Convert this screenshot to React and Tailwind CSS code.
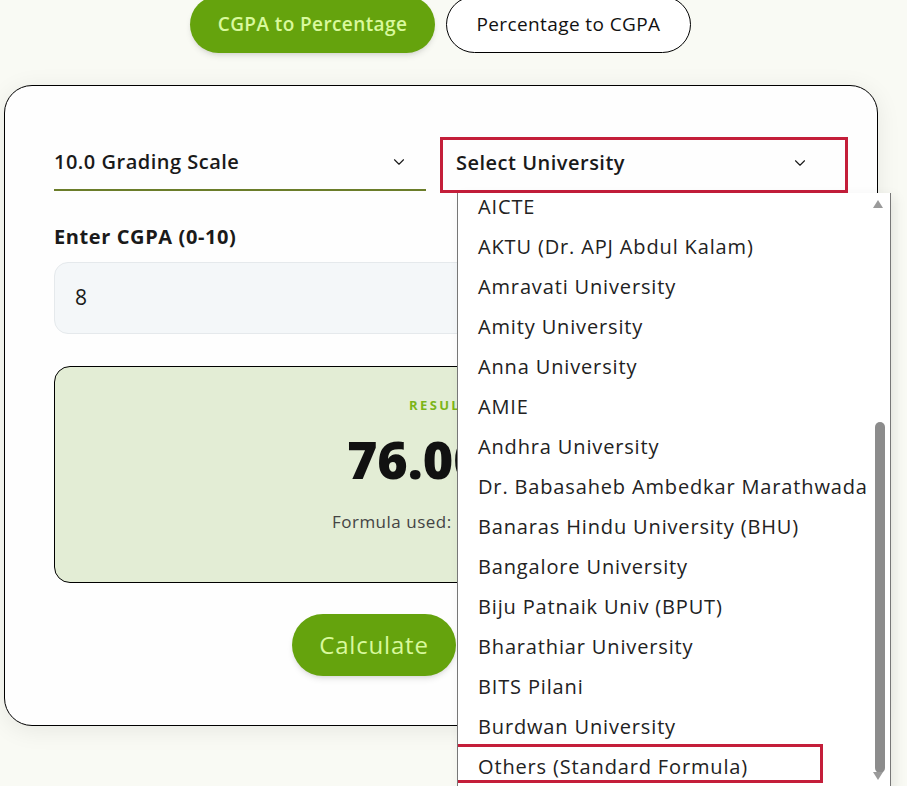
import React from 'react';
import { ChevronDown } from 'lucide-react';

const universities = [
  'AICTE',
  'AKTU (Dr. APJ Abdul Kalam)',
  'Amravati University',
  'Amity University',
  'Anna University',
  'AMIE',
  'Andhra University',
  'Dr. Babasaheb Ambedkar Marathwada',
  'Banaras Hindu University (BHU)',
  'Bangalore University',
  'Biju Patnaik Univ (BPUT)',
  'Bharathiar University',
  'BITS Pilani',
  'Burdwan University',
  'Others (Standard Formula)',
];

const App = () => {
  return (
    <div
      className="relative min-h-screen overflow-hidden bg-[#f9faf4] text-[#1a1a1a]"
      style={{ fontFamily: '"Open Sans", "Noto Sans", sans-serif' }}
    >
      {/* Mode tabs */}
      <div className="flex gap-[11px] -mt-[4px] pl-[190px]">
        <button className="h-[57px] w-[245px] shrink-0 rounded-full bg-[#65a30d] text-[19px] font-semibold tracking-[0.4px] text-[#d9f99d] shadow-md">
          CGPA to Percentage
        </button>
        <button className="h-[57px] w-[245px] shrink-0 rounded-full border border-black bg-white text-[19px] font-medium tracking-[0.4px] text-[#111]">
          Percentage to CGPA
        </button>
      </div>

      {/* Card */}
      <div className="ml-[4px] mt-[32px] w-[874px] rounded-[28px] border border-black bg-[#fefefe] px-[49px] pt-[49px] pb-[49px] shadow-[0_4px_24px_rgba(0,0,0,0.08)]">
        <div className="flex items-start">
          <div className="flex h-[56px] w-[372px] shrink-0 items-center justify-between border-b-2 border-[#6b7d2a] pr-[18px]">
            <span className="text-[20px] font-semibold tracking-[0.5px]">10.0 Grading Scale</span>
            <ChevronDown size={18} strokeWidth={1.5} />
          </div>
          <div className="ml-[14px] mt-[2px] flex h-[56px] w-[408px] shrink-0 items-center justify-between border-[3px] border-[#c41e3a] pb-[5px] pl-[13px] pr-[36px]">
            <span className="text-[20px] font-semibold tracking-[0.5px]">Select University</span>
            <ChevronDown size={18} strokeWidth={1.5} />
          </div>
        </div>

        <div className="mt-[30px] text-[20px] font-bold leading-[28px] tracking-[0.6px]">Enter CGPA (0-10)</div>
        <div className="mt-[11px] flex h-[72px] w-[772px] items-center rounded-[14px] border border-[#e5e9ec] bg-[#f4f7f9] px-[20px] text-[21px]">
          8
        </div>

        <div className="mt-[32px] flex h-[217px] w-[772px] flex-col items-center rounded-[16px] border border-black bg-[#e3edd5]">
          <div className="mt-[29px] text-[13px] font-bold tracking-[0.18em] text-[#7cb518]">RESULT</div>
          <div className="mt-[13px] text-[52px] font-extrabold leading-[60px] text-[#111]">76.00%</div>
          <div className="mt-[20px] text-[17px] tracking-[0.5px] text-[#444]">Formula used: CGPA × 9.5</div>
        </div>

        <div className="mt-[31px] flex justify-center gap-[14px]">
          <button className="h-[62px] w-[164px] rounded-full bg-[#65a30d] text-[24px] font-medium tracking-[0.8px] text-[#d9f99d] shadow-md">
            Calculate
          </button>
          <button className="h-[62px] w-[120px] rounded-full border border-black bg-white text-[24px] font-medium">
            Reset
          </button>
        </div>
      </div>

      {/* Open university dropdown */}
      <div className="absolute left-[457px] top-[193px] h-[600px] w-[434px] overflow-hidden border-x border-[#777] bg-white shadow-[4px_4px_12px_rgba(0,0,0,0.08)]">
        <div className="-mt-[6px]">
          {universities.map((u) => (
            <div key={u} className="flex h-[40px] items-center pl-[20px] text-[20px] tracking-[0.85px] text-[#222]">
              {u}
            </div>
          ))}
        </div>
        {/* scrollbar */}
        <svg className="absolute right-[6px] top-[6px]" width="12" height="10" viewBox="0 0 12 10">
          <polygon points="6,1 11,9 1,9" fill="#9a9a9a" />
        </svg>
        <div className="absolute right-[5px] top-[229px] h-[351px] w-[10px] rounded-full bg-[#8c8c8c]" />
        <svg className="absolute right-[6px] top-[578px]" width="12" height="10" viewBox="0 0 12 10">
          <polygon points="1,1 11,1 6,9" fill="#9a9a9a" />
        </svg>
        {/* highlight box */}
        <div className="absolute left-[-6px] top-[551px] h-[39px] w-[371px] border-[3px] border-[#c41e3a]" />
      </div>
    </div>
  );
};

export default App;
